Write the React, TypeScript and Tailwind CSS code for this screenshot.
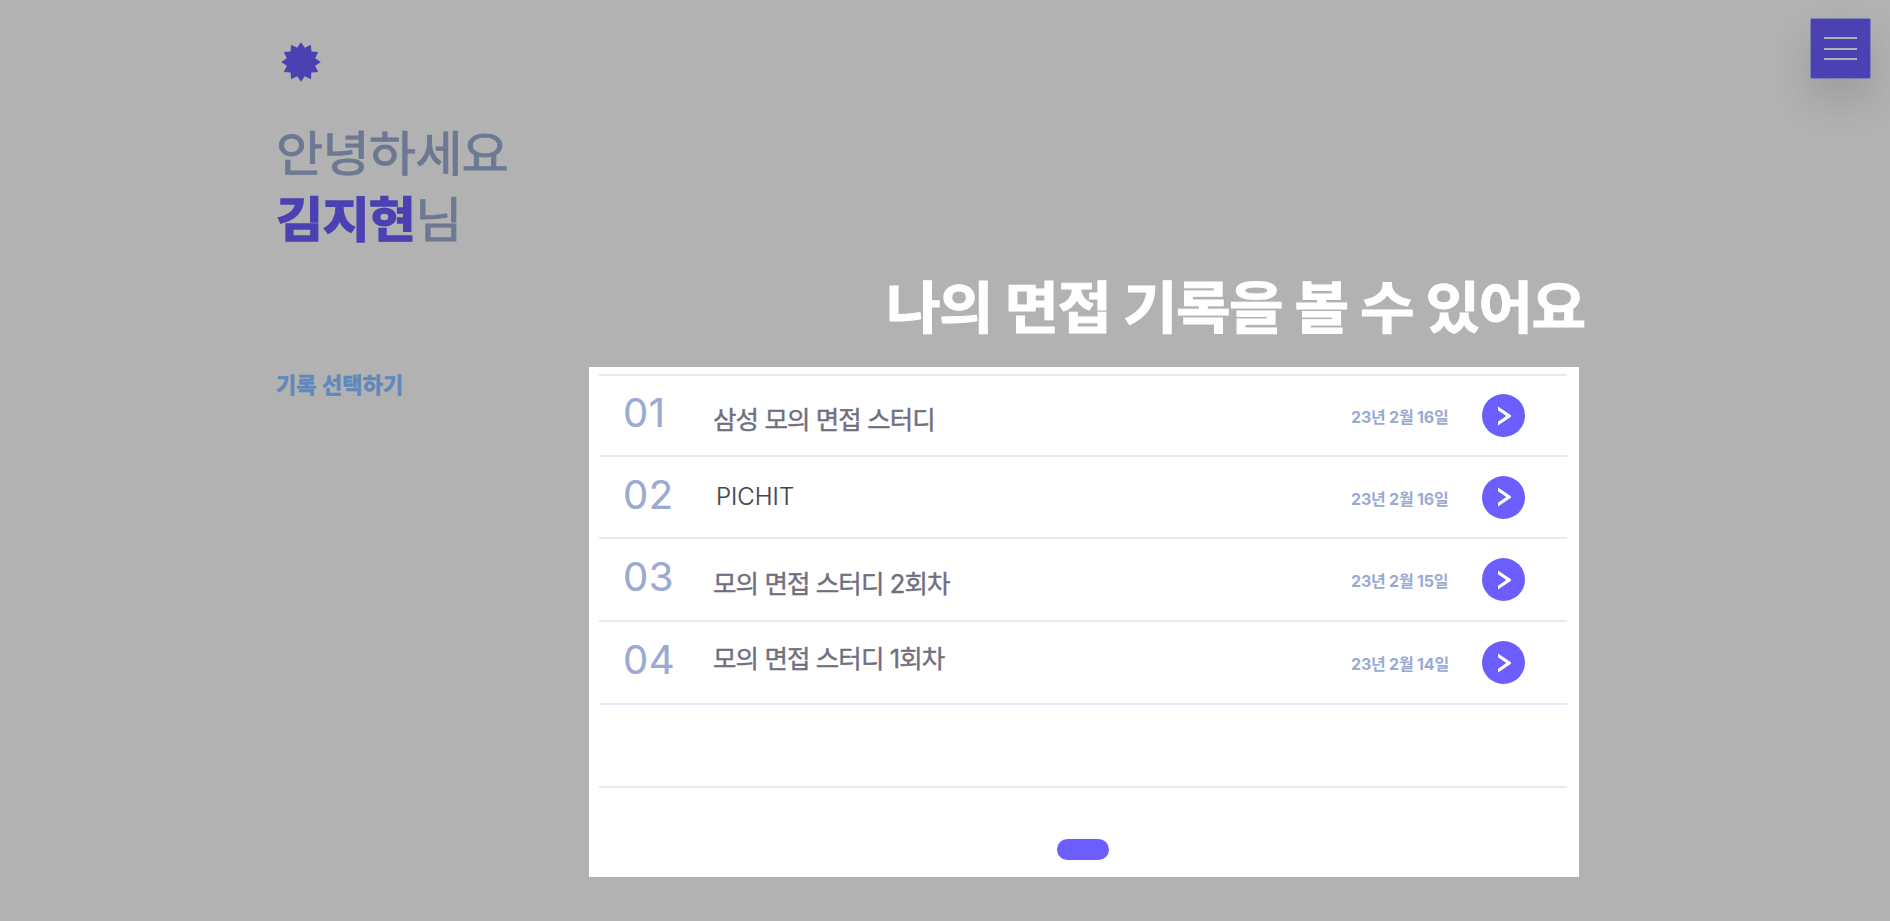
type Interview = {
  no: string;
  title: string;
  date: string;
  row: string;
  titleStyle: string;
};

const korean = "text-[25.5px] tracking-[-0.9px] text-[#716f7f] [-webkit-text-stroke:0.4px_#716f7f]";

const interviews: Interview[] = [
  { no: "01", title: "삼성 모의 면접 스터디", date: "23년 2월 16일", row: "h-[81px]", titleStyle: `${korean} pt-[8px]` },
  { no: "02", title: "PICHIT", date: "23년 2월 16일", row: "h-[82px]", titleStyle: "pl-[3px] text-[24px] tracking-[0px] text-[#45434f] font-light [-webkit-text-stroke:0.2px_#45434f]" },
  { no: "03", title: "모의 면접 스터디 2회차", date: "23년 2월 15일", row: "h-[83px]", titleStyle: `${korean} pt-[8px]` },
  { no: "04", title: "모의 면접 스터디 1회차", date: "23년 2월 14일", row: "h-[83px]", titleStyle: `${korean} pb-[8px]` },
];

function Logo() {
  const points = Array.from({ length: 24 }, (_, i) => {
    const r = i % 2 === 0 ? 19.8 : 14.7;
    const a = (i * Math.PI) / 12;
    return `${20 + r * Math.sin(a)},${20 - r * Math.cos(a)}`;
  }).join(" ");
  return (
    <svg className="ml-[5px] h-10 w-10" viewBox="0 0 40 40">
      <polygon points={points} fill="#4c41b2" />
    </svg>
  );
}

function MenuButton() {
  return (
    <button className="flex h-[61px] w-[61px] flex-col items-center justify-center gap-[8.5px] rounded-[2px] border border-[#8580b2] bg-[#4c41b2] shadow-[0_20px_40px_rgba(0,0,0,0.13)]">
      <span className="h-[2px] w-[33px] bg-[#b2b2b2]" />
      <span className="h-[2px] w-[33px] bg-[#b2b2b2]" />
      <span className="h-[2px] w-[33px] bg-[#b2b2b2]" />
    </button>
  );
}

function InterviewRow({ item }: { item: Interview }) {
  return (
    <li className={`flex items-center border-t-2 border-[#e3eaf6] pl-[24px] pr-[42px] ${item.row}`}>
      <span className="w-[90px] pb-[5px] text-[40px] leading-none tracking-[0.5px] text-[#9aaad2] [-webkit-text-stroke:0.2px_#9aaad2]">{item.no}</span>
      <span className={`flex-1 whitespace-nowrap leading-none ${item.titleStyle}`}>{item.title}</span>
      <span className="mr-[33px] w-[98px] whitespace-nowrap pt-[3px] text-[16px] font-bold leading-none tracking-[-0.2px] text-[#9aaad2]">
        {item.date}
      </span>
      <button className="flex h-[43px] w-[43px] items-center justify-center rounded-full bg-[#6c5dff]">
        <svg className="h-5 w-[14px]" viewBox="0 0 14 20">
          <path d="M1 .5 L14 9.2 V10.8 L1 19.5 V15.7 L9.3 10 L1 4.3 Z" fill="#fff" />
        </svg>
      </button>
    </li>
  );
}

export default function App() {
  return (
    <main className="flex h-[921px] w-[1890px] flex-col overflow-hidden bg-[#b2b2b2] font-[Inter,'Noto_Sans_CJK_KR',sans-serif]">
      <header className="flex h-[281px] shrink-0 items-start justify-between pl-[276px] pr-[19px]">
        <div className="pt-[42px]">
          <Logo />
          <h1 className="mt-[39px] origin-left scale-x-[1.07] whitespace-nowrap text-[48px] leading-[66px] tracking-[-0.8px] text-[#6d7892] [-webkit-text-stroke:0.9px_#6d7892]">
            안녕하세요
            <br />
            <strong className="font-bold text-[#4c41b2] [-webkit-text-stroke:1.4px_#4c41b2]">김지현</strong>님
          </h1>
        </div>
        <div className="pt-[18px]">
          <MenuButton />
        </div>
      </header>
      <div className="flex flex-1 pl-[276px]">
        <aside className="w-[313px] pt-[91px]">
          <h2 className="whitespace-nowrap text-[22px] font-bold leading-[26px] tracking-[0.1px] text-[#6088bb] [-webkit-text-stroke:0.6px_#6088bb]">기록 선택하기</h2>
        </aside>
        <section className="flex w-[1000px] flex-col">
          <h2 className="ml-[297px] h-[86px] w-[700px] origin-left scale-x-[1.06] whitespace-nowrap pt-px text-[56px] font-bold leading-[52px] tracking-[-1.5px] text-white [-webkit-text-stroke:1px_#fff]">
            나의 면접 기록을 볼 수 있어요
          </h2>
          <div className="flex h-[510px] w-[990px] flex-col bg-white pl-[10px] pr-[12px] pt-[7px]">
            <ul>
              {interviews.map((item) => (
                <InterviewRow key={item.no} item={item} />
              ))}
              <li className="h-[85px] border-y-2 border-[#e3eaf6]" />
            </ul>
            <div className="ml-[458px] mt-[51px] h-[21px] w-[52px] rounded-full bg-[#6c5dff]" />
          </div>
        </section>
      </div>
    </main>
  );
}
